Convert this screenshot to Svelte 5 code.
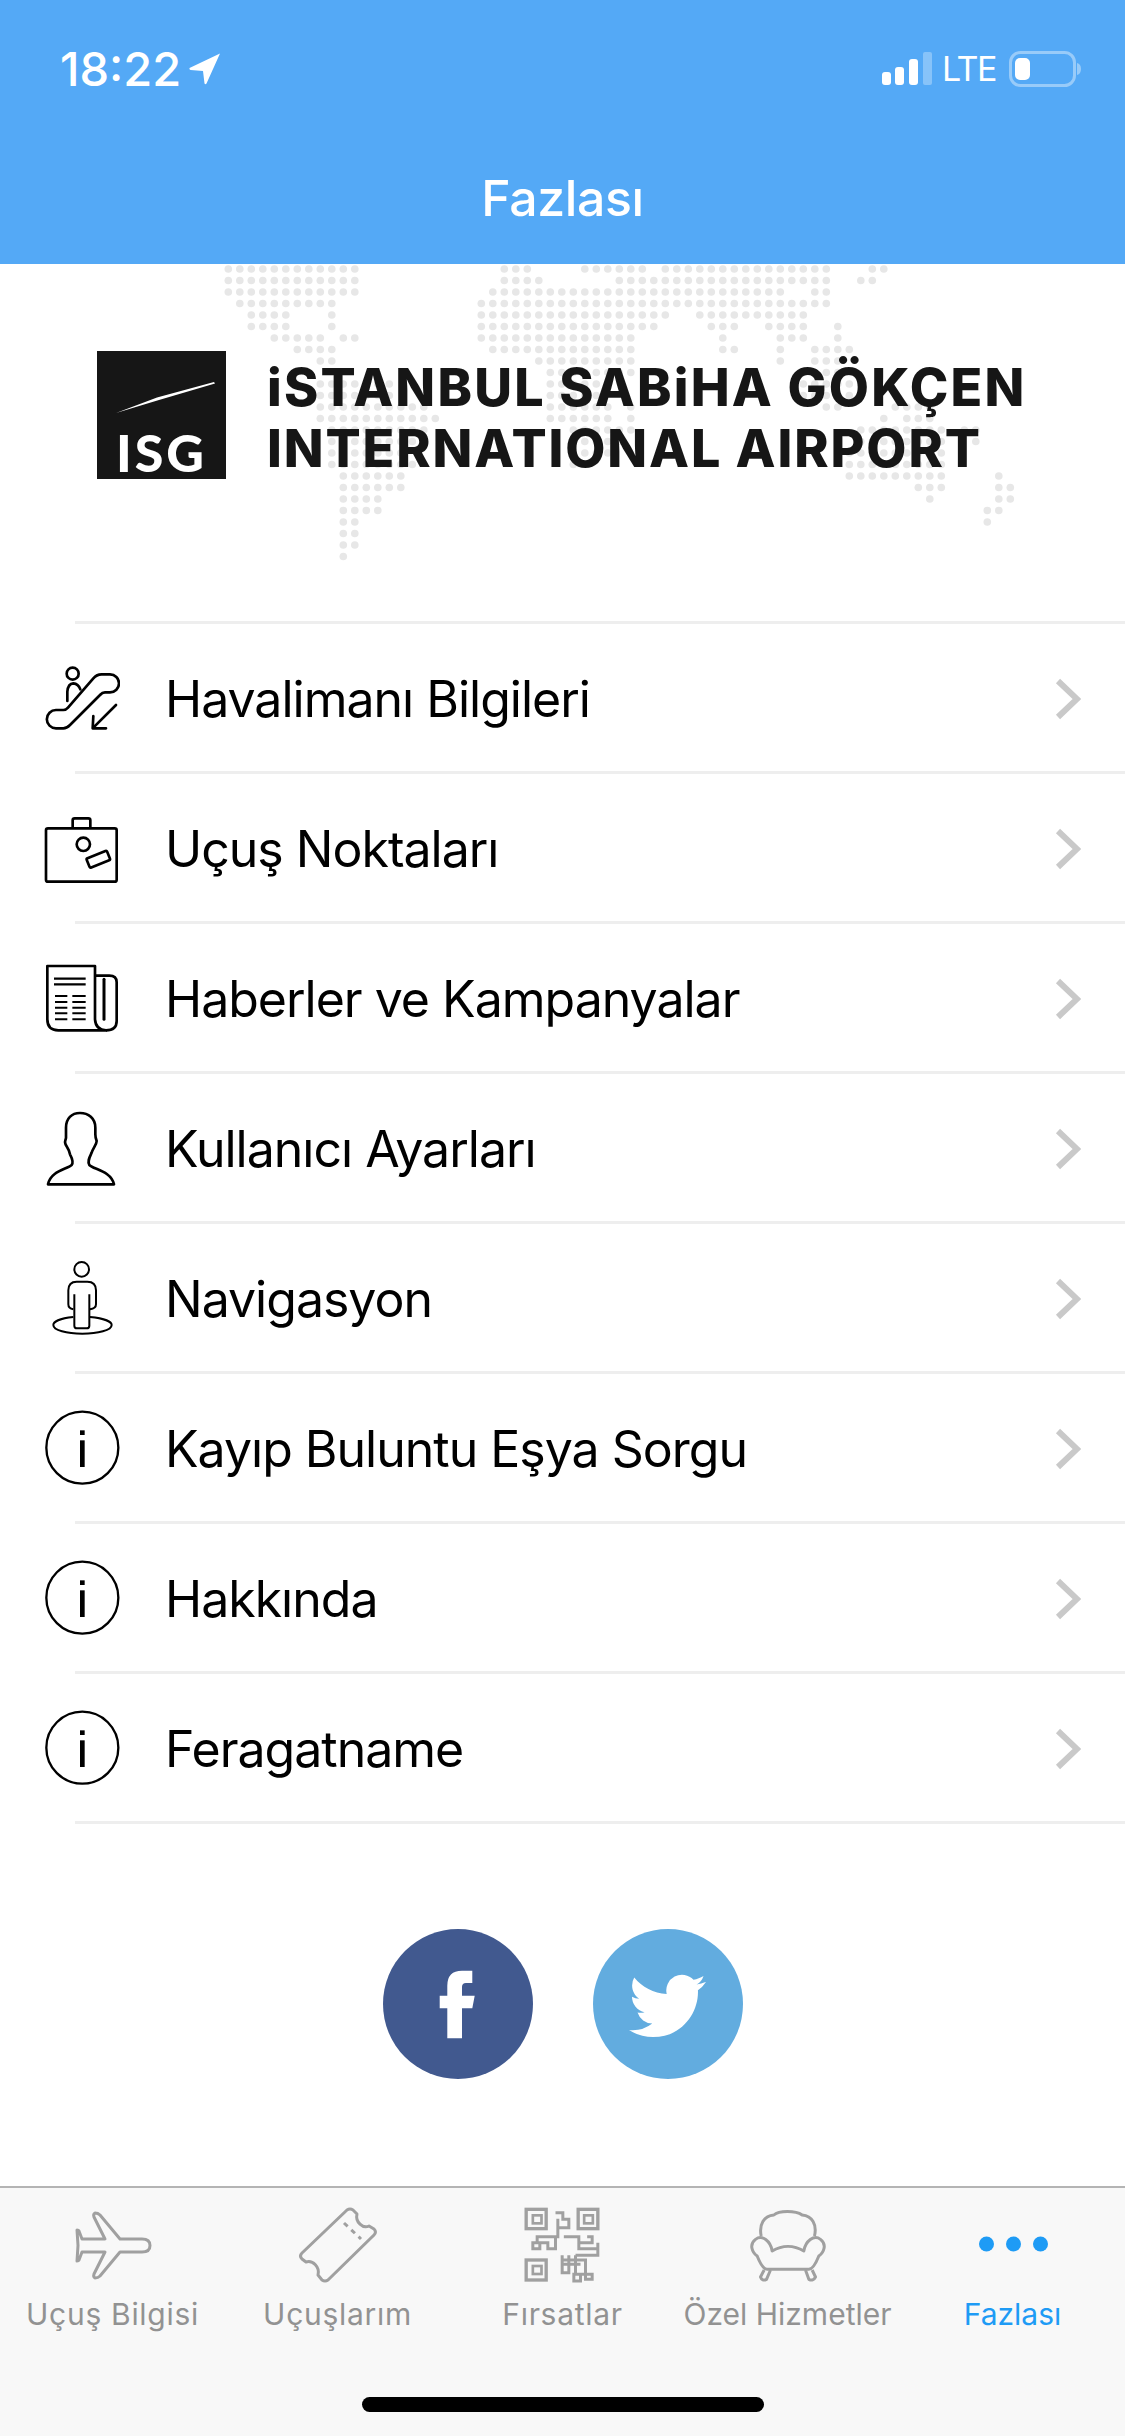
<script lang="ts">
  // world map dots: each row is a list of [from, to] column runs
  const mapRows = [
    [[0,11],[24,26],[31,36],[38,52],[56,57]],
    [[0,11],[24,27],[34,52],[55,56]],
    [[0,11],[23,48],[51,52]],
    [[1,9],[22,52]],
    [[2,5],[9,9],[22,38],[41,50]],
    [[2,5],[9,9],[22,37],[42,44],[47,50],[53,53]],
    [[4,8],[10,11],[22,35],[43,43],[48,50],[53,53]],
    [[6,9],[23,35],[43,44],[48,48],[51,54]],
    [[8,9],[27,35],[48,48],[51,53]],
    [[28,35],[50,54]],
    [[8,14],[28,32],[50,55]],
    [[8,14],[28,32],[50,55]],
    [[8,17],[28,33],[35,35],[52,53],[58,61]],
    [[8,18],[28,33],[35,35],[57,57],[59,61]],
    [[9,17],[30,35],[55,62],[64,65]],
    [[9,16],[31,34],[55,62],[65,65]],
    [[9,15],[30,33],[54,62]],
    [[9,16],[30,30],[54,62]],
    [[10,15],[54,62],[67,67]],
    [[10,15],[60,62],[67,68]],
    [[10,13],[61,61],[67,68]],
    [[10,13],[66,67]],
    [[10,11],[66,66]],
    [[10,11]],
    [[10,11]],
    [[10,10]]
  ];

  const mapDots = mapRows.flatMap((runs, r) =>
    runs.flatMap(([from, to]) => {
      const dots = [];
      for (let c = from; c <= to; c++) dots.push({ x: 228.3 + c * 11.5, y: 5 + r * 11.5 });
      return dots;
    })
  );

  const menu = [
    { label: "Havalimanı Bilgileri", icon: "escalator" },
    { label: "Uçuş Noktaları", icon: "suitcase" },
    { label: "Haberler ve Kampanyalar", icon: "news" },
    { label: "Kullanıcı Ayarları", icon: "user" },
    { label: "Navigasyon", icon: "nav" },
    { label: "Kayıp Buluntu Eşya Sorgu", icon: "info" },
    { label: "Hakkında", icon: "info" },
    { label: "Feragatname", icon: "info" }
  ];

  const tabs = [
    { label: "Uçuş Bilgisi", icon: "plane", wide: true },
    { label: "Uçuşlarım", icon: "ticket", wide: true },
    { label: "Fırsatlar", icon: "qr", wide: true },
    { label: "Özel Hizmetler", icon: "chair", wide: false },
    { label: "Fazlası", icon: "more", wide: false }
  ];
</script>

<div class="page">
  <header class="top">
    <div class="status">
      <div class="status-left">
        <span class="time">18:22</span>
        <svg class="loc" width="32" height="32" viewBox="0 0 32 32"><path d="M31 0.500 L0.500 15 Q0 16.500 1.500 17 L14 18 L15.500 30.500 Q16.500 32 17.500 30.500 Z" fill="#fff" /></svg>
      </div>
      <div class="status-right">
        <svg width="52" height="34" viewBox="0 0 52 34">
          <rect x="0" y="20" width="9" height="13" rx="3" fill="#fff" />
          <rect x="13" y="15" width="9" height="18" rx="3" fill="#fff" />
          <rect x="27" y="7" width="9" height="26" rx="3" fill="#fff" />
          <rect x="41" y="0" width="9" height="33" rx="2" fill="#fff" opacity="0.3" />
        </svg>
        <span class="lte">LTE</span>
        <svg width="72" height="36" viewBox="0 0 72 36">
          <rect x="1.500" y="1.500" width="64" height="33" rx="10" fill="none" stroke="#fff" stroke-opacity="0.4" stroke-width="3" />
          <rect x="6" y="7" width="15" height="22" rx="5" fill="#fff" />
          <path d="M68 12 Q72 13 72 18 Q72 23 68 24 Z" fill="#fff" fill-opacity="0.4" />
        </svg>
      </div>
    </div>
    <h1 class="title">Fazlası</h1>
  </header>

  <section class="brand">
    <svg class="map" width="1125" height="358" viewBox="0 0 1125 358">
      {#each mapDots as d}
        <circle cx={d.x} cy={d.y} r="3.800" fill="#e7e7e7" />
      {/each}
    </svg>
    <div class="logo-box">
      <svg class="swoosh" width="129" height="80" viewBox="0 0 129 80">
        <path d="M19 62 L60 46.500 L117 31 L118 32.500 L62 49 Z" fill="#fff" />
      </svg>
      <span class="logo-isg">ISG</span>
    </div>
    <div class="logo-text">
      <div class="logo-line one">iSTANBUL SABiHA GÖKÇEN</div>
      <div class="logo-line two">INTERNATIONAL AIRPORT</div>
    </div>
  </section>

  <ul class="menu">
    {#each menu as item}
      <li class="row">
        {#if item.icon === "escalator"}
          <svg class="row-icon" width="90" height="90" viewBox="0 36 270 270" fill="none" stroke="#000" stroke-width="8" stroke-linejoin="round" stroke-linecap="round">
            <path d="M78 207 H100 Q108 207 114 200 L190 112 Q200 100 215 100 H240 A27 27 0 0 1 240 154 H225 Q217 154 210 162 L120 252 Q110 262 100 262 H78 A27.500 27.500 0 0 1 78 207 Z" />
            <circle cx="128" cy="98" r="18" />
            <path d="M112 180 V152 Q114 128 130 127 Q145 128 151 145" />
            <path d="M258 192 L190 260 M190 225 L188 262 H228" />
          </svg>
        {:else if item.icon === "suitcase"}
          <svg class="row-icon" width="90" height="90" viewBox="0 486 270 270" fill="none" stroke="#000" stroke-width="8" stroke-linejoin="round">
            <rect x="48" y="562" width="212" height="160" rx="6" />
            <path d="M128 562 V538 Q128 532 134 532 H175 Q181 532 181 538 V562" />
            <circle cx="160" cy="610" r="20" />
            <rect x="172" y="640" width="66" height="30" rx="4" transform="rotate(-22 205 655)" />
          </svg>
        {:else if item.icon === "news"}
          <svg class="row-icon" width="90" height="90" viewBox="0 36 270 270" fill="none" stroke="#000" stroke-width="8" stroke-linejoin="round">
            <path d="M52 75 H195 V235 Q197 266 228 268 H85 Q52 268 52 235 Z" />
            <path d="M197 104 H238 Q260 104 260 124 V240 Q260 268 228 268" />
            <path d="M222 115 V235" stroke-width="9" stroke-linecap="round" />
            <path d="M72 113 H167 M72 130 H167" stroke-width="7" />
            <path d="M75 165 H112 M127 165 H167 M75 183 H112 M127 183 H167 M75 200 H112 M127 200 H167 M75 217 H112 M127 217 H167 M75 235 H112 M127 235 H167" stroke-width="6" />
          </svg>
        {:else if item.icon === "user"}
          <svg class="row-icon" width="90" height="90" viewBox="0 486 270 270" fill="none" stroke="#000" stroke-width="8" stroke-linejoin="round">
            <path d="M150 516 C125 516 108 532 108 560 V590 C108 595 103 600 106 608 C108 616 116 620 120 640 C128 655 130 665 125 672 C110 685 62 690 54 730 H252 C244 690 190 685 178 672 C172 660 178 650 185 635 C190 620 200 610 200 600 C198 595 196 590 196 580 V560 C196 532 175 516 150 516 Z" />
          </svg>
        {:else if item.icon === "nav"}
          <svg class="row-icon" width="90" height="90" viewBox="0 36 270 270" fill="none" stroke="#000" stroke-width="6" stroke-linejoin="round">
            <circle cx="155" cy="85" r="22" />
            <path d="M130 205 Q115 203 115 190 V148 Q115 122 140 122 H172 Q198 122 198 148 V190 Q198 203 180 205" />
            <path d="M133 160 V254 Q133 262 141 262 H170 Q178 262 178 254 V160" />
            <path d="M130 228 C90 232 70 242 70 252 C70 268 110 278 157 278 C204 278 245 268 245 252 C245 242 222 232 180 228" />
          </svg>
        {:else}
          <svg class="row-icon" width="90" height="90" viewBox="0 486 270 270">
            <circle cx="157" cy="620" r="108" fill="none" stroke="#000" stroke-width="7" />
            <rect x="150" y="568" width="14" height="14" fill="#000" />
            <rect x="150" y="598" width="14" height="80" fill="#000" />
          </svg>
        {/if}
        <span class="row-label">{item.label}</span>
        <svg class="chevron" width="26" height="42" viewBox="0 0 26 42" fill="none"><path d="M3 3 L22 21 L3 39" stroke="#c9c9c9" stroke-width="6" /></svg>
      </li>
    {/each}
  </ul>

  <div class="social">
    <svg width="150" height="150" viewBox="0 0 150 150">
      <circle cx="75" cy="75" r="75" fill="#41598f" />
      <path d="M89.300 41.700 V54 H83 Q79 54 79 58 V66.700 H91.700 L89.300 79.300 H79 V109.300 H64.300 V79.300 H56.700 V66.700 H64.300 V56.700 Q64.300 41.700 79 41.700 Z" fill="#fff" />
    </svg>
    <svg width="150" height="150" viewBox="0 0 150 150">
      <circle cx="75" cy="75" r="75" fill="#62acdf" />
      <path transform="translate(36 38.500) scale(3.200)" d="M23.953 4.570a10 10 0 01-2.825.775 4.958 4.958 0 002.163-2.723c-.951.555-2.005.959-3.127 1.184a4.920 4.920 0 00-8.384 4.482C7.690 8.095 4.067 6.130 1.640 3.162a4.822 4.822 0 00-.666 2.475c0 1.710.870 3.213 2.188 4.096a4.904 4.904 0 01-2.228-.616v.060a4.923 4.923 0 003.946 4.827 4.996 4.996 0 01-2.212.085 4.936 4.936 0 004.604 3.417 9.867 9.867 0 01-6.102 2.105c-.390 0-.779-.023-1.170-.067a13.995 13.995 0 007.557 2.209c9.053 0 13.998-7.496 13.998-13.985 0-.210 0-.420-.015-.630A9.935 9.935 0 0024 4.590z" fill="#fff" />
    </svg>
  </div>

  <nav class="tabbar">
    {#each tabs as tab}
      <div class="tab" class:active={tab.icon === "more"}>
        {#if tab.icon === "plane"}
          <svg width="90" height="80" viewBox="0 0 90 80" fill="none" stroke="#a0a0a0" stroke-width="3" stroke-linejoin="round">
            <path d="M82 39.500 Q82 33 74 33 H52 L32 9 Q30 7 27 7 Q25 8 26 11 L37 33 H14 L11 25 Q10.500 24 9 24 L10 39.500 L9 55 Q10.500 55 11 54 L14 46 H37 L26 68 Q25 71 27 72 Q30 72 32 70 L52 46 H74 Q82 46 82 39.500 Z" />
          </svg>
        {:else if tab.icon === "ticket"}
          <svg width="90" height="80" viewBox="0 0 90 80" fill="none" stroke="#a0a0a0" stroke-width="3" stroke-linejoin="round">
            <path d="M60 4 L64 8 C62 16 70 23 76 20 L81 23 Q84 26 81 29 L35 74 Q32 76 29 74 L25 69 C27 61 20 54 13 56 L9 53 Q6 50 9 47 L54 4 Q57 2 60 4 Z" />
            <path d="M51 17 L68 33" stroke-dasharray="5 5" />
          </svg>
        {:else if tab.icon === "qr"}
          <svg width="90" height="80" viewBox="52.500 30 270 240" fill="none" stroke="#a0a0a0" stroke-width="9">
            <rect x="77" y="40" width="60" height="58" stroke-width="10" />
            <rect x="97" y="58" width="26" height="24" stroke-width="8" />
            <rect x="233" y="40" width="59" height="58" stroke-width="10" />
            <rect x="251" y="58" width="26" height="24" stroke-width="8" />
            <rect x="77" y="192" width="60" height="60" stroke-width="10" />
            <rect x="97" y="210" width="26" height="24" stroke-width="8" />
            <path d="M165 50 H187 V70 H205 V95 H172 V68 M172 95 V122 H110 V140 H97 V158 H118 V140 H142 V158 H165 V122" />
            <path d="M190 122 H235 V158 H250 M260 122 H275 V140 H235 M235 158 H292 V140 M292 158 V178 H225" />
            <path d="M185 178 V230 H205 V178 M185 205 H240 M225 178 V230 M185 192 H255 V250 H275 V235 H220 V255 H240 V235" />
          </svg>
        {:else if tab.icon === "chair"}
          <svg width="90" height="80" viewBox="367.500 105 270 240" fill="none" stroke="#a0a0a0" stroke-width="9" stroke-linejoin="round">
            <path d="M422 195 C415 160 430 135 460 132 C475 118 525 118 545 132 C575 135 590 160 582 195" />
            <path d="M455 240 C450 210 425 190 405 205 C385 220 395 245 410 255 C420 280 430 295 440 295 H565 C575 295 585 280 595 255 C610 245 620 220 600 205 C580 190 555 210 550 240 C520 222 485 222 455 240 Z" />
            <path d="M431 297 L420 318 Q425 332 438 325 L450 297 M555 297 L565 325 Q578 332 585 318 L575 297" />
          </svg>
        {:else}
          <svg width="90" height="80" viewBox="0 0 90 80" fill="#1e9bf5">
            <circle cx="18.500" cy="38" r="7.500" />
            <circle cx="45.500" cy="38" r="7.500" />
            <circle cx="72.500" cy="38" r="7.500" />
          </svg>
        {/if}
        <span class="tab-label" class:wide={tab.wide}>{tab.label}</span>
      </div>
    {/each}
    <div class="home-bar"></div>
  </nav>
</div>

<style>
  :global(body) {
    margin: 0;
    background: #fff;
  }

  .page {
    width: 1125px;
    height: 2436px;
    display: flex;
    flex-direction: column;
    font-family: Inter, "Liberation Sans", sans-serif;
    overflow: hidden;
    color: #000;
  }

  .top {
    height: 264px;
    flex: none;
    background: #54a9f6;
    color: #fff;
    display: flex;
    flex-direction: column;
    box-sizing: border-box;
    padding-top: 46px;
  }

  .status {
    display: flex;
    justify-content: space-between;
    align-items: center;
    height: 46px;
    padding: 0 44px 0 60px;
  }

  .status-left {
    display: flex;
    align-items: center;
    gap: 8px;
  }

  .time {
    font-size: 47px;
    font-weight: 500;
    letter-spacing: 0;
    line-height: 46px;
  }

  .status-right {
    display: flex;
    align-items: center;
    gap: 10px;
  }

  .lte {
    font-size: 34px;
    line-height: 36px;
    font-weight: 400;
    width: 57px;
    margin-left: -2px;
    letter-spacing: -1.500px;
  }

  .title {
    margin: 76px 0 0;
    text-align: center;
    font-size: 50px;
    line-height: 60px;
    font-weight: 500;
    letter-spacing: -0.400px;
  }

  .brand {
    position: relative;
    height: 357px;
    flex: none;
    box-sizing: border-box;
    padding: 87px 0 0 97px;
    display: flex;
    align-items: flex-start;
    gap: 41px;
  }

  .map {
    position: absolute;
    left: 0;
    top: 0;
  }

  .logo-box {
    position: relative;
    width: 129px;
    height: 128px;
    background: #161616;
    display: flex;
    justify-content: center;
    align-items: flex-end;
  }

  .swoosh {
    position: absolute;
    left: 0;
    top: 0;
  }

  .logo-isg {
    color: #fff;
    font-family: Lato, sans-serif;
    font-weight: 900;
    font-size: 52px;
    line-height: 50px;
    margin-bottom: 2px;
    letter-spacing: 3px;
  }

  .logo-text {
    position: relative;
    color: #161616;
    font-family: Inter, sans-serif;
    font-weight: 800;
    font-size: 52px;
    line-height: 61px;
    white-space: nowrap;
    margin-top: 6px;
  }

  .logo-line.one {
    letter-spacing: 2.200px;
  }

  .logo-line.two {
    letter-spacing: 1.900px;
  }

  .menu {
    list-style: none;
    margin: 0;
    padding: 3px 0 0;
    position: relative;
    flex: none;
  }

  .menu::before {
    content: "";
    position: absolute;
    left: 75px;
    right: 0;
    top: 0;
    height: 3px;
    background: #eeeeee;
  }

  .row {
    position: relative;
    height: 150px;
    box-sizing: border-box;
    display: flex;
    align-items: center;
    padding: 0 44px 3px 30px;
  }

  .row::after {
    content: "";
    position: absolute;
    left: 75px;
    right: 0;
    bottom: 0;
    height: 3px;
    background: #eeeeee;
  }

  .row-icon {
    flex: none;
  }

  .row-label {
    margin: 3px 0 0 45px;
    font-size: 50px;
    line-height: 60px;
    letter-spacing: -1px;
  }

  .chevron {
    margin: 3px 0 0 auto;
  }

  .social {
    flex: 1;
    display: flex;
    justify-content: center;
    gap: 60px;
    padding-top: 105px;
    box-sizing: border-box;
  }

  .tabbar {
    position: relative;
    flex: none;
    height: 250px;
    box-sizing: border-box;
    background: #f8f8f8;
    border-top: 2px solid #b4b4b4;
    display: grid;
    grid-template-columns: repeat(5, 225px);
    padding-top: 18px;
  }

  .tab {
    display: flex;
    flex-direction: column;
    align-items: center;
    color: #929292;
  }

  .tab.active {
    color: #1e9bf5;
  }

  .tab-label {
    font-size: 30px;
    line-height: 36px;
    margin-top: 10px;
    white-space: nowrap;
  }

  .tab-label.wide {
    letter-spacing: 0.700px;
  }

  .home-bar {
    position: absolute;
    left: 362px;
    bottom: 24px;
    width: 402px;
    height: 15px;
    border-radius: 8px;
    background: #000;
  }
</style>
